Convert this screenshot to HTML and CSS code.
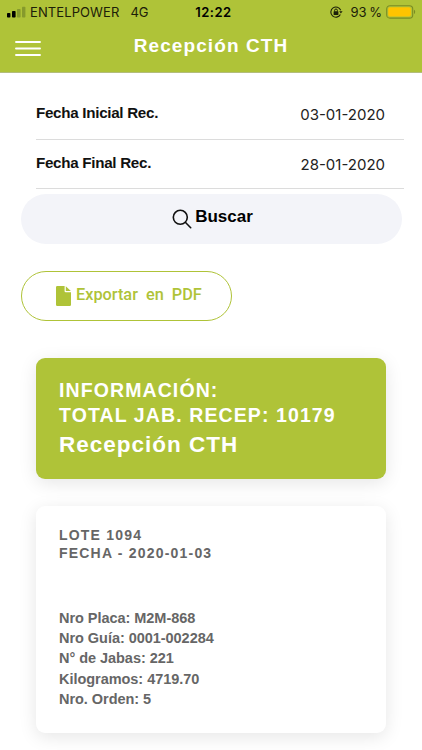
FILE: index.html
```html
<!DOCTYPE html>
<html lang="es">
<head>
    <meta charset="UTF-8">
    <meta name="viewport" content="width=device-width, initial-scale=1.0">
    <title>Recepción CTH</title>
    <link rel="stylesheet" href="styles.css">
</head>
<body>
    <header class="header">
        <div class="status-bar">
            <div class="status-left">
                <svg class="signal" width="19" height="12" viewBox="0 0 19 12">
                    <rect x="0" y="7" width="3.4" height="4.6" rx="0.8"/>
                    <rect x="5" y="5" width="3.6" height="6.6" rx="0.8"/>
                    <rect x="10" y="3" width="3.6" height="8.6" rx="0.8" fill="#869a2c"/>
                    <rect x="15" y="0.8" width="3.4" height="10.8" rx="0.8" fill="#869a2c"/>
                </svg>
                <span class="carrier">ENTELPOWER</span>
                <span class="network">4G</span>
            </div>
            <span class="clock">12:22</span>
            <div class="status-right">
                <svg class="lock" width="13" height="12" viewBox="0 0 13 12" fill="none" stroke="#1c2008">
                    <path d="M10.7 4.2A5.1 5.1 0 1 0 10.4 8.6" stroke-width="1.1"/>
                    <path d="M9.2 5.2h3.4l-1.7 2.3z" fill="#1c2008" stroke="none"/>
                    <rect x="3.6" y="5.3" width="4.8" height="3.6" rx="0.5" fill="#1c2008" stroke="none"/>
                    <path d="M4.6 5.5V4.4a1.4 1.4 0 0 1 2.8 0v1.1" stroke-width="1"/>
                </svg>
                <span class="percent">93 %</span>
                <svg class="battery" width="30" height="14" viewBox="0 0 30 14">
                    <rect x="0.7" y="0.7" width="26" height="12.4" rx="3.2" fill="none" stroke="#7b8c24" stroke-width="1.1"/>
                    <rect x="2.2" y="2.2" width="22.6" height="9.4" rx="1.8" fill="#ffc400"/>
                    <path d="M28 4.8c1.6.6 1.6 3.6 0 4.2z" fill="#7b8c24"/>
                </svg>
            </div>
        </div>
        <div class="nav-bar">
            <svg class="menu" width="28" height="17" viewBox="0 0 28 17" stroke="#fff" stroke-width="1.9" stroke-linecap="round">
                <path d="M2 2h24M2 8.5h24M2 15h24"/>
            </svg>
            <h1 class="title">Recepción CTH</h1>
        </div>
    </header>

    <main class="content">
        <div class="fields">
            <div class="field">
                <span class="field-label">Fecha Inicial Rec.</span>
                <span class="field-value">03-01-2020</span>
            </div>
            <div class="field">
                <span class="field-label">Fecha Final Rec.</span>
                <span class="field-value">28-01-2020</span>
            </div>
        </div>

        <button type="button" class="btn-search">
            <svg width="20" height="20" viewBox="0 0 20 20" fill="none" stroke="#111" stroke-width="1.6" stroke-linecap="round">
                <circle cx="8.3" cy="8.3" r="7"/>
                <path d="M13.3 13.3l5.4 5.4"/>
            </svg>
            <span>Buscar</span>
        </button>

        <button type="button" class="btn-export">
            <svg width="15" height="20" viewBox="0 0 15 20" fill="#afc338">
                <path d="M1.3 0H8.6V5.2a1.1 1.1 0 0 0 1.1 1.1H15V18.7a1.3 1.3 0 0 1-1.3 1.3H1.3A1.3 1.3 0 0 1 0 18.7V1.3A1.3 1.3 0 0 1 1.3 0z"/>
                <path d="M9.8 0.2l5 4.9h-5z"/>
            </svg>
            <span>Exportar en PDF</span>
        </button>

        <section class="card card-info">
            <h2 class="info-line">INFORMACIÓN:</h2>
            <h2 class="info-line">TOTAL JAB. RECEP: 10179</h2>
            <h2 class="info-title">Recepción CTH</h2>
        </section>

        <section class="card card-lote">
            <h3>LOTE 1094</h3>
            <h3>FECHA - 2020-01-03</h3>
            <ul class="details">
                <li>Nro Placa: M2M-868</li>
                <li>Nro Guía: 0001-002284</li>
                <li>N° de Jabas: 221</li>
                <li>Kilogramos: 4719.70</li>
                <li>Nro. Orden: 5</li>
            </ul>
        </section>
    </main>
</body>
</html>
```
FILE: styles.css
```css
* {
    box-sizing: border-box;
}

body {
    margin: 0;
    height: 750px;
    overflow: hidden;
    background-color: #fff;
    font-family: "Liberation Sans", Arial, sans-serif;
    color: #111;
}

h1, h2, h3, ul {
    margin: 0;
    padding: 0;
}

.header {
    height: 73px;
    background-color: #afc338;
    border-bottom: 1px solid #b3bd7c;
}

.status-bar {
    display: grid;
    grid-template-columns: 1fr auto 1fr;
    align-items: center;
    height: 24px;
    padding: 0 6px 0 7px;
    font-family: Inter, sans-serif;
    font-size: 13px;
    color: #1c2008;
}

.status-left, .status-right {
    display: flex;
    align-items: center;
}

.status-right {
    justify-content: flex-end;
}

.carrier {
    margin-left: 4px;
    letter-spacing: 0.1px;
}

.network {
    margin-left: 11px;
}

.clock {
    padding-left: 4px;
    font-weight: 600;
    letter-spacing: 0.5px;
    color: #000;
}

.percent {
    margin: 0 4px 0 7px;
    word-spacing: -1px;
}

.nav-bar {
    display: grid;
    grid-template-columns: 40px 1fr 40px;
    align-items: center;
    height: 44px;
    padding: 0 14px;
}

.menu {
    margin-top: 4px;
}

.title {
    font-size: 19px;
    line-height: 24px;
    letter-spacing: 1.1px;
    text-align: center;
    color: #fff;
}

.content {
    padding: 17px 21px 0;
}

.fields {
    margin: 0 -3px 0 15px;
}

.field {
    display: flex;
    justify-content: space-between;
    height: 49.5px;
    padding: 14px 19px 0 0;
    border-bottom: 1px solid #dcdcdc;
}

.field-label {
    font-size: 15.2px;
    font-weight: bold;
    line-height: 18px;
    letter-spacing: -0.3px;
}

.field-value {
    padding-top: 2px;
    font-family: Inter, sans-serif;
    font-size: 15px;
    line-height: 18px;
    color: #222;
}

.btn-search {
    display: flex;
    justify-content: center;
    align-items: center;
    gap: 3px;
    width: 381px;
    height: 50px;
    margin-top: 5px;
    padding: 0 0 0 2px;
    border: none;
    border-radius: 25px;
    background-color: #f3f4f9;
    font-family: inherit;
    font-size: 17px;
    font-weight: bold;
    color: #000;
}

.btn-search svg {
    margin-top: -1px;
}

.btn-search span {
    margin-top: -4px;
}

.btn-export {
    display: flex;
    align-items: center;
    gap: 5px;
    width: 211px;
    height: 50px;
    margin-top: 27px;
    padding: 0 0 0 34px;
    border: 1px solid #afc338;
    border-radius: 25px;
    background-color: #fff;
    font-family: Roboto, sans-serif;
    font-size: 16.3px;
    font-weight: 500;
    word-spacing: 4px;
    color: #afc338;
}

.btn-export span {
    margin-top: -3px;
}

.card {
    margin: 0 15px;
    padding: 0 23px;
    border-radius: 9px;
    box-shadow: 0 4px 18px rgba(0, 0, 0, 0.1);
}

.card-info {
    height: 121px;
    margin-top: 37px;
    padding-top: 20px;
    background-color: #afc338;
    color: #fff;
}

.info-line {
    font-size: 19.5px;
    line-height: 25px;
    letter-spacing: 1.1px;
}

.info-title {
    margin-top: 4px;
    font-size: 22.5px;
    line-height: 26px;
    letter-spacing: 1px;
}

.card-lote {
    height: 227px;
    margin-top: 27px;
    padding-top: 20px;
    background-color: #fff;
    color: #666;
}

.card-lote h3 {
    font-size: 14px;
    line-height: 18px;
    letter-spacing: 1.2px;
}

.details {
    margin-top: 46px;
    list-style: none;
    font-size: 14.5px;
    font-weight: bold;
    line-height: 20.2px;
    letter-spacing: -0.04px;
}
```
